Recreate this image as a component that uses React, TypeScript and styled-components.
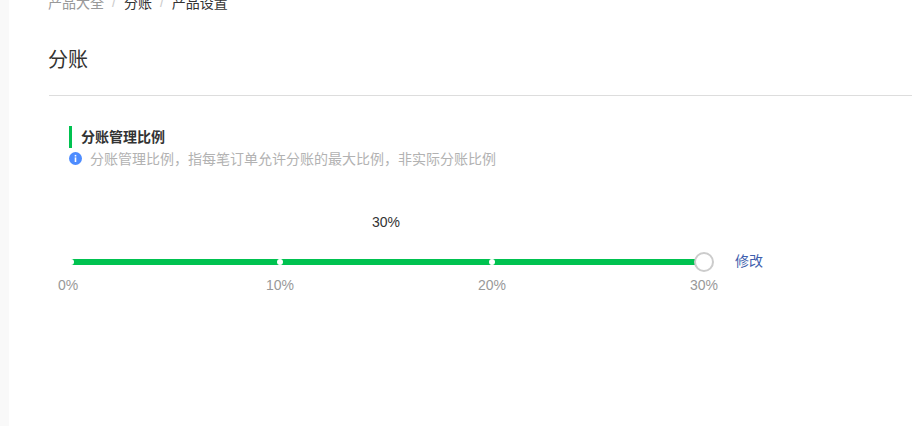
import React from "react";
import styled, { createGlobalStyle } from "styled-components";

const Global = createGlobalStyle`
  html, body { margin: 0; padding: 0; background: #fff; overflow: hidden; }
  body { font-family: "Liberation Sans", "Noto Sans CJK SC", sans-serif; }
`;
const Page = styled.div`
  display: flex; width: 912px; height: 426px; overflow: hidden; background: #fff;
`;
const Rail = styled.div`
  width: 9px; flex: none; background: #f9f9f9;
`;
const Main = styled.main`
  flex: 1; min-width: 0; padding-left: 39px; margin-top: -8px;
`;
const Crumbs = styled.nav`
  display: flex; align-items: center; height: 20px; font-size: 14px; color: #333;
`;
const Crumb = styled.span<{ $muted?: boolean }>`
  color: ${p => (p.$muted ? "#999" : "#333")};
`;
const Sep = styled.span`
  color: #ccc; margin: 0 8px; font-size: 14px;
`;
const Title = styled.h1`
  margin: 34px 0 0; font-size: 20px; font-weight: 400; line-height: 28px; color: #333; height: 49px;
`;
const Divider = styled.div`
  height: 1px; background: #ddd; margin-left: 1px;
`;
const Section = styled.section`
  padding: 30px 0 0 21px;
`;
const Heading = styled.h2`
  margin: 0; border-left: 3px solid #00c250; padding-left: 9px; height: 22px;
  font-size: 14px; line-height: 22px; font-weight: 700; color: #333;
`;
const Hint = styled.p`
  display: flex; align-items: center; gap: 8px; margin: 0; height: 20px;
  font-size: 14px; color: #b2b2b2;
`;
const Slider = styled.div`
  position: relative; width: 636px; height: 100px; margin: 44px 0 0 -1px;
`;
const Value = styled.div`
  position: absolute; left: 0; right: 0; top: 0; text-align: center; font-size: 14px; line-height: 20px; color: #333;
`;
const Track = styled.div`
  position: absolute; left: 3px; right: 0; top: 47px; height: 6px; background: #00c250;
`;
const Dot = styled.i`
  position: absolute; top: 47px; width: 6px; height: 6px; margin-left: -3px; border-radius: 50%; background: #fff;
`;
const Handle = styled.i`
  position: absolute; left: 626px; top: 40px; width: 20px; height: 20px; box-sizing: border-box;
  border: 2px solid #ccc; border-radius: 50%; background: #fff;
`;
const Mark = styled.span`
  position: absolute; top: 63px; transform: translateX(-50%); font-size: 14px; line-height: 20px; color: #999;
`;
const Edit = styled.a`
  position: absolute; left: 667px; top: 39px; font-size: 14px; line-height: 20px; color: #3f5fae; white-space: nowrap;
`;

export default function App() {
  const marks: [string, number][] = [["0%", 0], ["10%", 212], ["20%", 424], ["30%", 636]];
  return (
    <Page>
      <Global />
      <Rail />
      <Main>
        <Crumbs>
          <Crumb $muted>产品大全</Crumb><Sep>/</Sep>
          <Crumb>分账</Crumb><Sep>/</Sep>
          <Crumb>产品设置</Crumb>
        </Crumbs>
        <Title>分账</Title>
        <Divider />
        <Section>
          <Heading>分账管理比例</Heading>
          <Hint>
            <svg width="13" height="13" viewBox="0 0 13 13" aria-hidden="true">
              <circle cx="6.5" cy="6.5" r="6.5" fill="#4d8cff" />
              <rect x="5.7" y="5.4" width="1.6" height="4.6" fill="#fff" />
              <rect x="5.7" y="2.9" width="1.6" height="1.6" fill="#fff" />
            </svg>
            分账管理比例，指每笔订单允许分账的最大比例，非实际分账比例
          </Hint>
          <Slider>
            <Value>30%</Value>
            <Track />
            {[3, 212, 424].map(x => <Dot key={x} style={{ left: x }} />)}
            <Handle />
            {marks.map(([t, x]) => <Mark key={t} style={{ left: x }}>{t}</Mark>)}
            <Edit>修改</Edit>
          </Slider>
        </Section>
      </Main>
    </Page>
  );
}
